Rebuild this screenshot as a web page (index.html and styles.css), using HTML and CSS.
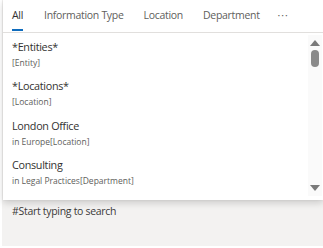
FILE: index.html
```html
<!DOCTYPE html>
<html lang="en">
<head>
  <meta charset="UTF-8"/>
  <title>Search picker</title>
  <link rel="stylesheet" href="styles.css">
</head>
<body>
  <div class="field">
    <div class="input">#Start typing to search</div>

    <!-- Suggestions callout -->
    <div class="callout">
      <nav class="tabs">
        <span class="tab active">All</span>
        <span class="tab">Information Type</span>
        <span class="tab">Location</span>
        <span class="tab">Department</span>
        <span class="tab more">&middot;&middot;&middot;</span>
      </nav>
      <div class="list-wrap">
        <ul class="list">
          <li><div class="name">*Entities*</div><div class="sub">[Entity]</div></li>
          <li><div class="name">*Locations*</div><div class="sub">[Location]</div></li>
          <li><div class="name">London Office</div><div class="sub">in Europe[Location]</div></li>
          <li><div class="name">Consulting</div><div class="sub">in Legal Practices[Department]</div></li>
        </ul>
        <div class="scroll">
          <span class="arrow up"></span>
          <span class="thumb"></span>
          <span class="track"></span>
          <span class="arrow down"></span>
        </div>
      </div>
    </div>
  </div>
</body>
</html>
```
FILE: styles.css
```css
:root{
  --text: #323130;
  --muted: #605e5c;
  --line: #e1dfdd;
  --blue: #0f6cbd;
  --grey: #f3f2f1;
}
* { box-sizing: border-box; margin: 0; padding: 0; }
body {
  background: #fff;
  font-family: 'Open Sans', 'Noto Sans', sans-serif;
  color: var(--text);
  width: 323px; height: 248px;
  overflow: hidden;
}

/* field under the callout */
.field {
  position: relative;
  margin-left: 2px;
  height: 246px;
  background: var(--grey);
}
.input {
  padding: 204px 0 0 10px;
  font-size: 10.5px;
  letter-spacing: -.3px;
  color: #3b3a39;
}

/* Callout */
.callout {
  position: absolute;
  top: 0; left: 1px; right: 0;
  height: 200px;
  background: #fff;
  box-shadow: 0 3px 7px rgba(0,0,0,.16), 0 0 2px rgba(0,0,0,.08);
}
.tabs {
  display: flex;
  gap: 20px;
  height: 33px;
  padding-left: 9px;
  border-bottom: 1px solid var(--line);
}
.tab {
  position: relative;
  font-size: 10.5px;
  letter-spacing: -.3px;
  line-height: 30px;
  color: var(--muted);
  white-space: nowrap;
}
.tab.active { color: var(--text); margin-right: 1px; }
.tab.active::after {
  content: '';
  position: absolute;
  left: 0; right: 0; bottom: 1px;
  height: 2px;
  background: var(--blue);
}
.tab.more { letter-spacing: 1px; margin-left: -2px; }

/* List */
.list-wrap {
  display: flex;
  height: 166px;
}
.list {
  flex: 1;
  list-style: none;
  padding: 5px 0 0 9px;
}
.list li { height: 39.4px; }
.name { font-size: 10.8px; letter-spacing: -.3px; line-height: 17px; }
.sub { font-size: 8.5px; line-height: 15px; color: var(--muted); }

/* Scrollbar */
.scroll {
  width: 14px;
  margin: 2px 1px 3px 0;
  background: #fafafa;
  display: flex;
  flex-direction: column;
  align-items: center;
}
.arrow {
  width: 0; height: 0;
  border-left: 5px solid transparent;
  border-right: 5px solid transparent;
}
.arrow.up { border-bottom: 6px solid #7a7a7a; margin-top: 5px; }
.arrow.down { border-top: 6px solid #7a7a7a; margin-bottom: 5px; }
.thumb {
  width: 8px; height: 17px;
  margin-top: 4px;
  border-radius: 4px;
  background: #8a8a8a;
}
.track { flex: 1; }
```
